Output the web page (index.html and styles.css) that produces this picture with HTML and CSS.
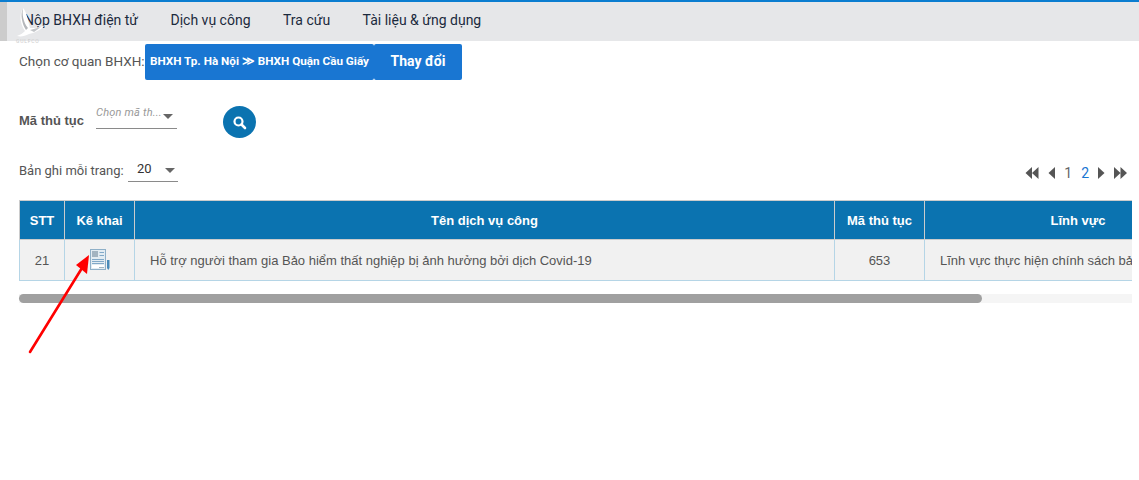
FILE: index.html
```html
<!DOCTYPE html>
<html lang="vi">
<head>
  <meta charset="UTF-8">
  <title>Dịch vụ công BHXH</title>
  <link rel="stylesheet" href="styles.css">
</head>
<body>
<div class="nav">
  <a class="nav-item">Nộp BHXH điện tử</a>
  <a class="nav-item">Dịch vụ công</a>
  <a class="nav-item">Tra cứu</a>
  <a class="nav-item">Tài liệu &amp; ứng dụng</a>
</div>
<svg class="logo" width="36" height="46" viewBox="0 0 36 46">
  <path d="M8 8C12 12 13 22 15 28C20 28 25 28 30 25C26 30 19 33 14 34C10 36 6 37 2 36C5 35 8 33 10 31C5 24 4 14 8 8Z" fill="#fff"/>
  <path d="M8 8C7 14 8 22 13 28L11 30C7 24 5 14 8 8Z" fill="#b4b7bb"/>
  <path d="M15 30L26 27L19 32Z" fill="#c2c5c8"/>
  <text x="1" y="43" class="logo-text">GULFCO</text>
</svg>
<div class="agency">
  <span class="agency-label">Chọn cơ quan BHXH:</span>
  <button class="btn btn-path">BHXH Tp. Hà Nội ≫ BHXH Quận Cầu Giấy</button>
  <button class="btn btn-change">Thay đổi</button>
</div>
<div class="filter">
  <label class="filter-label">Mã thủ tục</label>
  <div class="select select-code">
    <span class="placeholder">Chọn mã th...</span>
    <i class="caret"></i>
  </div>
  <button class="search-btn">
    <svg width="15" height="15" viewBox="0 0 15 15"><circle cx="6.500" cy="6.500" r="4" fill="none" stroke="#fff" stroke-width="2.200"/><path d="M9.500 9.500L13 13" stroke="#fff" stroke-width="2.600" stroke-linecap="round"/></svg>
  </button>
</div>
<div class="paging">
  <span class="paging-label">Bản ghi mỗi trang:</span>
  <div class="select select-size">
    <span class="size-value">20</span>
    <i class="caret"></i>
  </div>
  <div class="pager">
    <svg width="14" height="12" viewBox="0 0 14 12"><path d="M7 0V12L0.500 6ZM13.500 0V12L7 6Z" fill="#555"/></svg>
    <svg width="7" height="12" viewBox="0 0 7 12"><path d="M7 0V12L0.500 6Z" fill="#555"/></svg>
    <span class="page">1</span>
    <span class="page page-on">2</span>
    <svg width="7" height="12" viewBox="0 0 7 12"><path d="M0 0V12L6.500 6Z" fill="#555"/></svg>
    <svg width="13" height="12" viewBox="0 0 13 12"><path d="M0 0V12L6.500 6ZM6.500 0V12L13 6Z" fill="#555"/></svg>
  </div>
</div>
<div class="table-wrap">
  <table class="grid">
    <thead>
      <tr>
        <th class="col-stt">STT</th>
        <th class="col-act">Kê khai</th>
        <th class="col-name">Tên dịch vụ công</th>
        <th class="col-code">Mã thủ tục</th>
        <th class="col-field">Lĩnh vực</th>
      </tr>
    </thead>
    <tbody>
      <tr>
        <td class="center">21</td>
        <td class="center">
          <svg class="form-icon" width="20" height="22" viewBox="0 0 20 22">
            <rect x="0.500" y="0.500" width="15" height="20" fill="#e3ecf2" stroke="#8fb0c8"/>
            <rect x="2" y="2" width="6" height="6" fill="#a3b4c1"/>
            <path d="M9.500 3.500H14M9.500 6.500H14M2 10.500H14M2 12.500H14M2 14.500H14" stroke="#82a9c8"/>
            <rect x="2" y="16" width="12" height="3" fill="#fff"/>
            <path d="M9 18.500H14" stroke="#a3b4c1"/>
            <path d="M17 11H19.500V19L18.250 21L17 19Z" fill="#4a8bb9"/>
          </svg>
        </td>
        <td class="text">Hỗ trợ người tham gia Bảo hiểm thất nghiệp bị ảnh hưởng bởi dịch Covid-19</td>
        <td class="center">653</td>
        <td class="text">Lĩnh vực thực hiện chính sách bảo hiểm thất nghiệp</td>
      </tr>
    </tbody>
  </table>
</div>
<div class="scrollbar"><div class="scroll-thumb"></div></div>
<svg class="arrow" width="70" height="105" viewBox="0 0 70 105">
  <path d="M2 102L54 18" stroke="#f00" stroke-width="2.600" stroke-linecap="round"/>
  <path d="M61 5L59 24L48 15Z" fill="#f00"/>
</svg>
</body>
</html>
```

FILE: styles.css
```css
body {
  margin: 0;
  background: #fff;
  color: #555;
  font-family: Roboto, "Liberation Sans", sans-serif;
  font-size: 13px;
  overflow: hidden;
}
.nav {
  display: flex;
  gap: 32.5px;
  height: 36px;
  padding: 0 0 3px 24px;
  align-items: center;
  border-top: 2px solid #0b7dd0;
  background: linear-gradient(to right, #ccc 7px, #e6e7e9 7px);
}
.nav-item {
  color: #1b2a3d;
  font-size: 14px;
}
.logo {
  position: absolute;
  left: 15px;
  top: 0;
}
.logo-text {
  font-size: 5px;
  fill: #ccc;
  letter-spacing: 0.8px;
}
.agency {
  display: flex;
  align-items: center;
  height: 36px;
  margin-top: 3px;
  padding-left: 19px;
}
.agency-label {
  width: 126px;
  padding-bottom: 2px;
  color: #555;
  font-size: 13.5px;
  white-space: nowrap;
}
.btn {
  height: 36px;
  border: 0;
  padding: 0 0 2px;
  border-radius: 2px;
  color: #fff;
  background: #1976d2;
  font-family: inherit;
  font-weight: 700;
}
.btn-path {
  width: 229px;
  font-size: 11.7px;
  white-space: nowrap;
}
.btn-change {
  width: 88px;
  font-size: 14px;
}
.filter {
  display: flex;
  align-items: flex-start;
  height: 36px;
  margin-top: 25px;
  padding-left: 19px;
}
.filter-label {
  width: 77px;
  margin-top: 8px;
  font-family: "Liberation Sans", Arial, sans-serif;
  font-size: 13px;
  font-weight: 700;
}
.select {
  position: relative;
  border-bottom: 1px solid #8a8a8a;
}
.select-code {
  width: 81px;
  height: 23px;
}
.placeholder {
  display: block;
  color: #999;
  font-size: 11px;
  font-style: italic;
  line-height: 15px;
  letter-spacing: 0.2px;
}
.caret {
  position: absolute;
  right: 4px;
  top: 9px;
  border-left: 5px solid transparent;
  border-right: 5px solid transparent;
  border-top: 5px solid #666;
}
.search-btn {
  width: 33px;
  height: 32px;
  margin: 1px 0 0 46px;
  padding: 0;
  border: 0;
  border-radius: 50%;
  background: #0b73b0;
  display: flex;
  align-items: center;
  justify-content: center;
}
.paging {
  display: flex;
  align-items: center;
  height: 24px;
  margin-top: 17px;
  padding: 0 12px 0 19px;
}
.paging-label {
  width: 109px;
  white-space: nowrap;
  font-size: 13px;
}
.select-size {
  width: 50px;
  height: 22px;
}
.size-value {
  margin-left: 9px;
  color: #333;
  line-height: 20px;
}
.select-size .caret {
  top: 9px;
  right: 3px;
}
.pager {
  display: flex;
  align-items: center;
  gap: 9px;
  margin-left: auto;
  margin-top: 6px;
}
.page {
  font-size: 14px;
  color: #666;
}
.page-on {
  color: #1976d2;
}
.table-wrap {
  margin: 18px 7px 0 19px;
  overflow: hidden;
}
.grid {
  width: 1213px;
  table-layout: fixed;
  border-collapse: collapse;
  font-family: "Liberation Sans", Arial, sans-serif;
}
.grid th {
  height: 38px;
  padding: 0;
  background: #0b73b0;
  color: #fff;
  font-size: 13px;
  font-weight: 700;
  border: 1px solid #ccc;
}
.grid td {
  height: 40px;
  padding: 0;
  background: #f1f1f1;
  border: 1px solid #b5d5e6;
  font-size: 13px;
  white-space: nowrap;
  overflow: hidden;
}
.col-stt { width: 44px; }
.col-act { width: 69px; }
.col-name { width: 699px; }
.col-code { width: 89px; }
.center { text-align: center; }
.grid .text { padding-left: 15px; }
.form-icon {
  display: block;
  margin: 0 0 0 25px;
}
.scrollbar {
  height: 9px;
  margin: 13px 7px 0 19px;
  background: #f5f5f5;
}
.scroll-thumb {
  width: 963px;
  height: 9px;
  border-radius: 5px;
  background: #a0a0a0;
}
.arrow {
  position: absolute;
  left: 28px;
  top: 250px;
}
```
